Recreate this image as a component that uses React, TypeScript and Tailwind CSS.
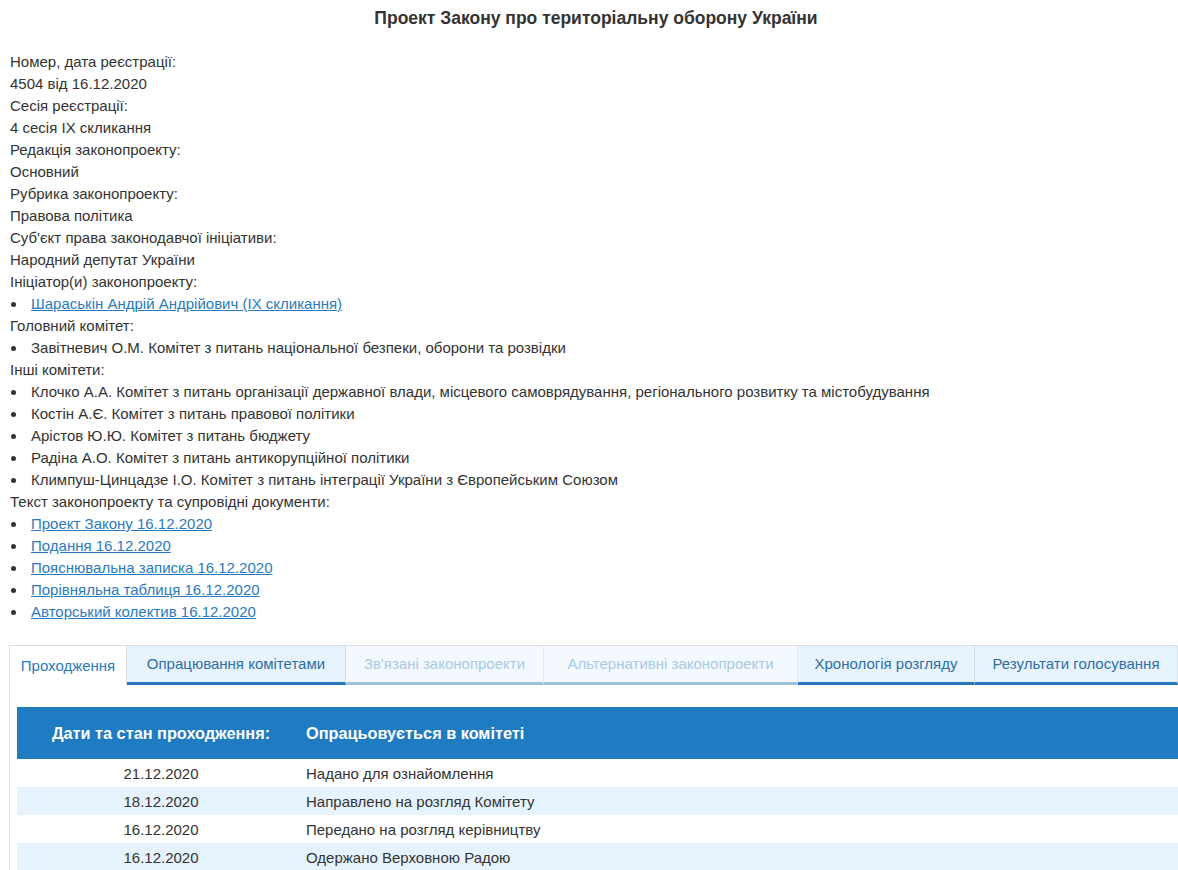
import React from "react";

const Dot = () => <span className="ml-[11px] mr-[15px] inline-block w-[5px] h-[5px] rounded-full bg-[#333] shrink-0" />;

const Item = ({ children, link }: { children: React.ReactNode; link?: boolean }) => (
  <div className="flex items-center h-[22px]">
    <Dot />
    {link ? (
      <a href="#" className="text-[#2a7ac0] underline">{children}</a>
    ) : (
      <span>{children}</span>
    )}
  </div>
);

const Line = ({ children }: { children: React.ReactNode }) => <div className="h-[22px] leading-[22px]">{children}</div>;

export default function App() {
  const tabs = [
    { t: "Проходження", w: "w-[117px]", kind: "active" },
    { t: "Опрацювання комітетами", w: "w-[219px]", kind: "on" },
    { t: "Зв'язані законопроекти", w: "w-[198px]", kind: "off" },
    { t: "Альтернативні законопроекти", w: "w-[254px]", kind: "off" },
    { t: "Хронологія розгляду", w: "w-[177px]", kind: "on" },
    { t: "Результати голосування", w: "flex-1", kind: "on" },
  ];
  const rows = [
    ["21.12.2020", "Надано для ознайомлення"],
    ["18.12.2020", "Направлено на розгляд Комітету"],
    ["16.12.2020", "Передано на розгляд керівництву"],
    ["16.12.2020", "Одержано Верховною Радою"],
  ];
  return (
    <div className="w-[1178px] h-[870px] overflow-hidden bg-white text-[#333] text-[15px] leading-[22px]" style={{ fontFamily: '"Liberation Sans", Arial, sans-serif' }}>
      <h1 className="mt-[7px] pl-[14px] text-center font-bold text-[17.5px] leading-[22px] text-[#333]">
        Проект Закону про територіальну оборону України
      </h1>
      <div className="mt-[22px] pl-[10px]">
        <Line>Номер, дата реєстрації:</Line>
        <Line>4504 від 16.12.2020</Line>
        <Line>Сесія реєстрації:</Line>
        <Line>4 сесія IX скликання</Line>
        <Line>Редакція законопроекту:</Line>
        <Line>Основний</Line>
        <Line>Рубрика законопроекту:</Line>
        <Line>Правова політика</Line>
        <Line>Суб'єкт права законодавчої ініціативи:</Line>
        <Line>Народний депутат України</Line>
        <Line>Ініціатор(и) законопроекту:</Line>
        <div className="-ml-[10px]">
          <Item link>Шараськін Андрій Андрійович (IX скликання)</Item>
        </div>
        <Line>Головний комітет:</Line>
        <div className="-ml-[10px]">
          <Item>Завітневич О.М. Комітет з питань національної безпеки, оборони та розвідки</Item>
        </div>
        <Line>Інші комітети:</Line>
        <div className="-ml-[10px]">
          <Item>Клочко А.А. Комітет з питань організації державної влади, місцевого самоврядування, регіонального розвитку та містобудування</Item>
          <Item>Костін А.Є. Комітет з питань правової політики</Item>
          <Item>Арістов Ю.Ю. Комітет з питань бюджету</Item>
          <Item>Радіна А.О. Комітет з питань антикорупційної політики</Item>
          <Item>Климпуш-Цинцадзе І.О. Комітет з питань інтеграції України з Європейським Союзом</Item>
        </div>
        <Line>Текст законопроекту та супровідні документи:</Line>
        <div className="-ml-[10px]">
          <Item link>Проект Закону 16.12.2020</Item>
          <Item link>Подання 16.12.2020</Item>
          <Item link>Пояснювальна записка 16.12.2020</Item>
          <Item link>Порівняльна таблиця 16.12.2020</Item>
          <Item link>Авторський колектив 16.12.2020</Item>
        </div>
      </div>

      <div className="mt-[22px] ml-[9px] border-l border-t border-[#dedede]">
        <div className="flex h-[39px]">
          {tabs.map((tab, i) => {
            const base = `${tab.w} h-[39px] flex items-center justify-center text-[15px] whitespace-nowrap border-r`;
            if (tab.kind === "active")
              return (
                <div key={i} className={`${base} bg-white border-[#dedede] text-[#2a7ac0]`}>{tab.t}</div>
              );
            if (tab.kind === "on")
              return (
                <div key={i} className={`${base} bg-[#e8f4fd] border-r-[#d6dde4] border-b-[3px] border-b-[#2878be] text-[#2d6ea7]`}>{tab.t}</div>
              );
            return (
              <div key={i} className={`${base} bg-[#f3f9fe] border-r-[#e4ebf1] border-b-[3px] border-b-[#9ec2de] text-[#a9cae5]`}>{tab.t}</div>
            );
          })}
        </div>
        <div className="pl-[7px] pt-[22px]">
          <div className="flex h-[52px] items-center bg-[#1f7bc2] text-white font-bold text-[16.3px]">
            <div className="w-[288px] text-center">Дати та стан проходження:</div>
            <div className="pl-[1px]">Опрацьовується в комітеті</div>
          </div>
          {rows.map((r, i) => (
            <div key={i} className={`flex h-[28px] items-center pt-[2px] ${i % 2 === 1 ? "bg-[#e6f3fd]" : "bg-white"}`}>
              <div className="w-[288px] text-center">{r[0]}</div>
              <div className="pl-[1px]">{r[1]}</div>
            </div>
          ))}
        </div>
      </div>
    </div>
  );
}
